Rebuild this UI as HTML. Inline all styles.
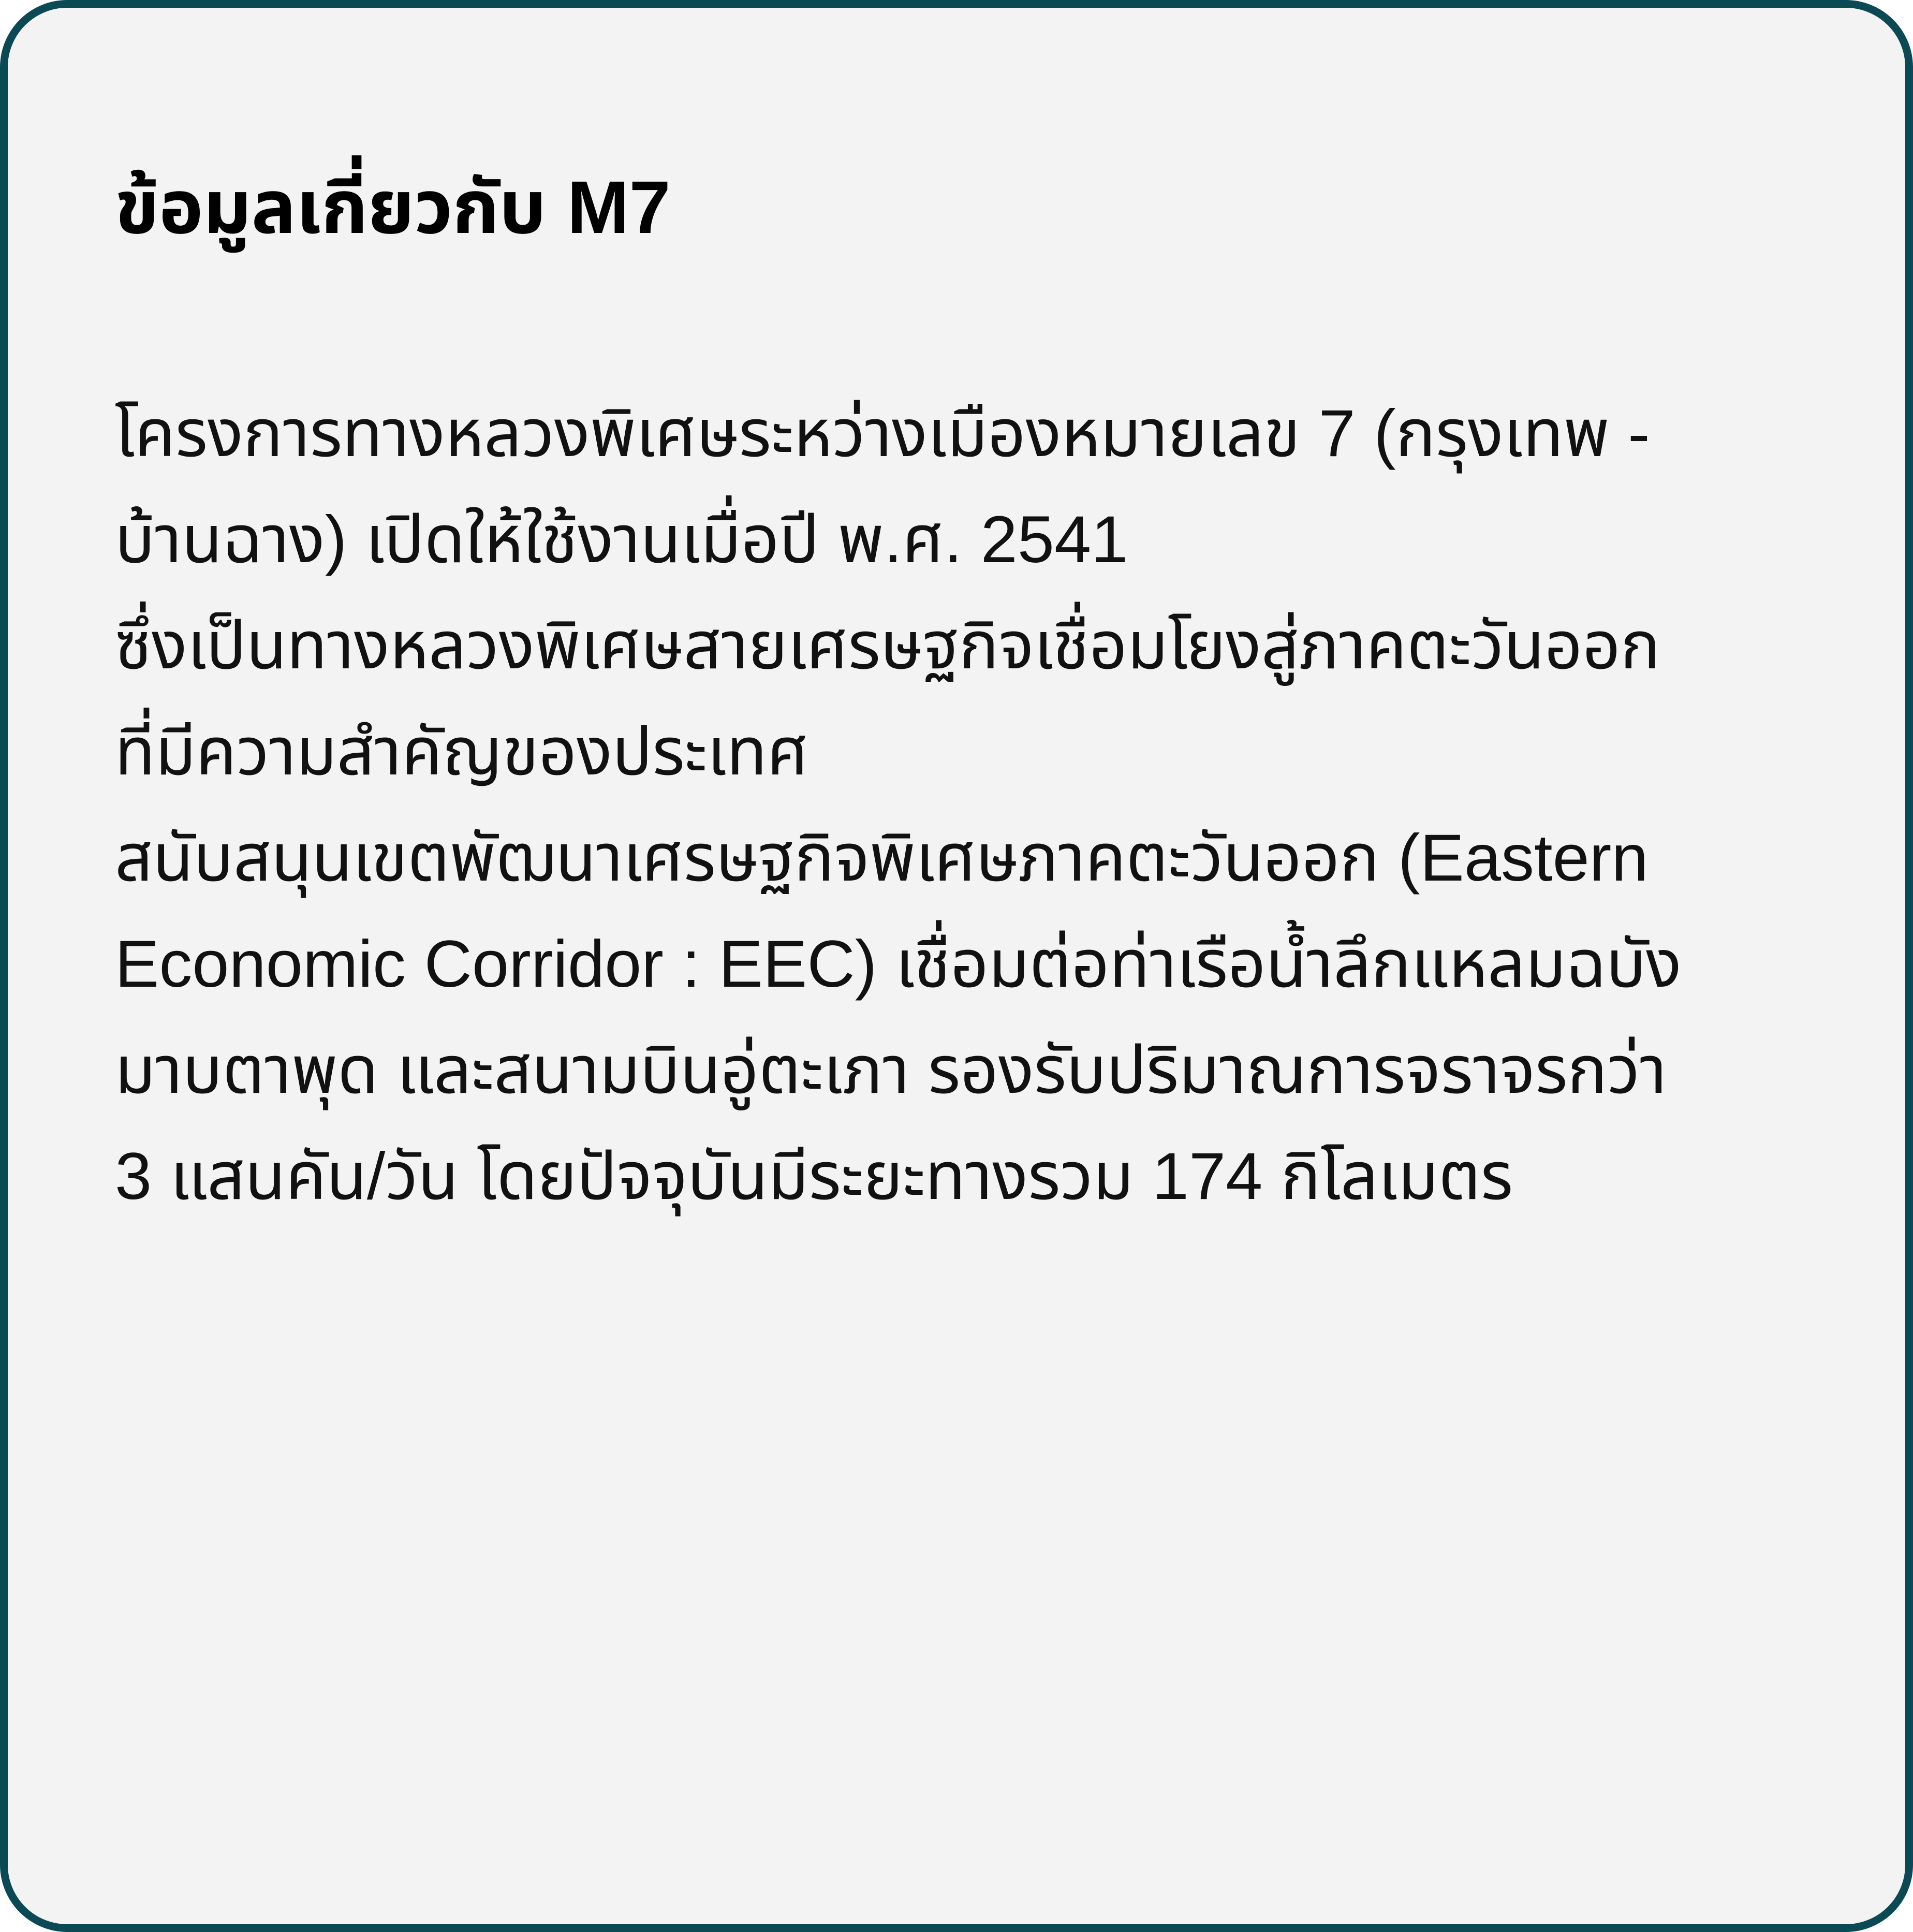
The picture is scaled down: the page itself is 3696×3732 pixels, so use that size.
<!DOCTYPE html>
<html><head><meta charset="utf-8"><style>
html,body{margin:0;padding:0;background:#fff;}
.card{position:absolute;left:0;top:0;width:3696px;height:3732px;box-sizing:border-box;border:15px solid #0b4a55;border-radius:130px;background:#f3f3f3;overflow:hidden;}
.t{position:absolute;left:207px;top:314px;font-family:"Liberation Sans","Noto Sans Thai",sans-serif;font-weight:bold;font-size:144px;line-height:144px;color:#000;white-space:nowrap;}
.b{position:absolute;left:207px;top:720px;font-family:"Liberation Sans","Noto Sans Thai",sans-serif;font-size:128px;line-height:205px;color:#111;white-space:nowrap;}
</style></head><body>
<div class="card">
<div class="t">ข้อมูลเกี่ยวกับ M7</div>
<div class="b">โครงการทางหลวงพิเศษระหว่างเมืองหมายเลข 7 (กรุงเทพ -<br>บ้านฉาง) เปิดให้ใช้งานเมื่อปี พ.ศ. 2541<br>ซึ่งเป็นทางหลวงพิเศษสายเศรษฐกิจเชื่อมโยงสู่ภาคตะวันออก<br>ที่มีความสำคัญของประเทศ<br>สนับสนุนเขตพัฒนาเศรษฐกิจพิเศษภาคตะวันออก (Eastern<br>Economic Corridor : EEC) เชื่อมต่อท่าเรือน้ำลึกแหลมฉบัง<br>มาบตาพุด และสนามบินอู่ตะเภา รองรับปริมาณการจราจรกว่า<br>3 แสนคัน/วัน โดยปัจจุบันมีระยะทางรวม 174 กิโลเมตร</div>
</div>
</body></html>
